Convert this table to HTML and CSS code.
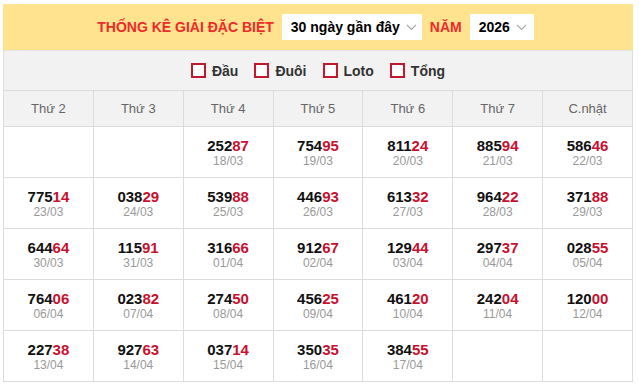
FILE: index.html
```html
<!DOCTYPE html>
<html lang="vi">
<head>
<meta charset="utf-8">
<link rel="stylesheet" href="styles.css">
</head>
<body>
<div class="box">
  <div class="topbar">
    <span class="title">THỐNG KÊ GIẢI ĐẶC BIỆT</span>
    <span class="select sel-days">30 ngày gần đây <svg class="chev" width="11" height="7" viewBox="0 0 11 7"><path d="M1 1l4.5 4.5L10 1" fill="none" stroke="#aaa" stroke-width="1.2"/></svg></span>
    <span class="title">NĂM</span>
    <span class="select sel-year">2026 <svg class="chev" width="11" height="7" viewBox="0 0 11 7"><path d="M1 1l4.5 4.5L10 1" fill="none" stroke="#aaa" stroke-width="1.2"/></svg></span>
  </div>
  <div class="filters">
    <label class="chk"><span class="sq"></span>Đầu</label>
    <label class="chk"><span class="sq"></span>Đuôi</label>
    <label class="chk"><span class="sq"></span>Loto</label>
    <label class="chk"><span class="sq"></span>Tổng</label>
  </div>
  <table class="grid">
    <thead>
      <tr><th>Thứ 2</th><th>Thứ 3</th><th>Thứ 4</th><th>Thứ 5</th><th>Thứ 6</th><th>Thứ 7</th><th>C.nhật</th></tr>
    </thead>
    <tbody>
      <tr>
        <td></td><td></td>
        <td><div class="n">252<b>87</b></div><div class="d">18/03</div></td>
        <td><div class="n">754<b>95</b></div><div class="d">19/03</div></td>
        <td><div class="n">811<b>24</b></div><div class="d">20/03</div></td>
        <td><div class="n">885<b>94</b></div><div class="d">21/03</div></td>
        <td><div class="n">586<b>46</b></div><div class="d">22/03</div></td>
      </tr>
      <tr>
        <td><div class="n">775<b>14</b></div><div class="d">23/03</div></td>
        <td><div class="n">038<b>29</b></div><div class="d">24/03</div></td>
        <td><div class="n">539<b>88</b></div><div class="d">25/03</div></td>
        <td><div class="n">446<b>93</b></div><div class="d">26/03</div></td>
        <td><div class="n">613<b>32</b></div><div class="d">27/03</div></td>
        <td><div class="n">964<b>22</b></div><div class="d">28/03</div></td>
        <td><div class="n">371<b>88</b></div><div class="d">29/03</div></td>
      </tr>
      <tr>
        <td><div class="n">644<b>64</b></div><div class="d">30/03</div></td>
        <td><div class="n">115<b>91</b></div><div class="d">31/03</div></td>
        <td><div class="n">316<b>66</b></div><div class="d">01/04</div></td>
        <td><div class="n">912<b>67</b></div><div class="d">02/04</div></td>
        <td><div class="n">129<b>44</b></div><div class="d">03/04</div></td>
        <td><div class="n">297<b>37</b></div><div class="d">04/04</div></td>
        <td><div class="n">028<b>55</b></div><div class="d">05/04</div></td>
      </tr>
      <tr>
        <td><div class="n">764<b>06</b></div><div class="d">06/04</div></td>
        <td><div class="n">023<b>82</b></div><div class="d">07/04</div></td>
        <td><div class="n">274<b>50</b></div><div class="d">08/04</div></td>
        <td><div class="n">456<b>25</b></div><div class="d">09/04</div></td>
        <td><div class="n">461<b>20</b></div><div class="d">10/04</div></td>
        <td><div class="n">242<b>04</b></div><div class="d">11/04</div></td>
        <td><div class="n">120<b>00</b></div><div class="d">12/04</div></td>
      </tr>
      <tr>
        <td><div class="n">227<b>38</b></div><div class="d">13/04</div></td>
        <td><div class="n">927<b>63</b></div><div class="d">14/04</div></td>
        <td><div class="n">037<b>14</b></div><div class="d">15/04</div></td>
        <td><div class="n">350<b>35</b></div><div class="d">16/04</div></td>
        <td><div class="n">384<b>55</b></div><div class="d">17/04</div></td>
        <td></td><td></td>
      </tr>
    </tbody>
  </table>
</div>
</body>
</html>
```

FILE: styles.css
```css
html, body {
  margin: 0;
  padding: 0;
  background: #fff;
}
body {
  font-family: "Liberation Sans", Arial, sans-serif;
  padding: 4px 0 0 3px;
}
.box {
  width: 630px;
}
.topbar {
  height: 46px;
  background: #ffe38f;
  display: flex;
  align-items: center;
  justify-content: center;
  padding-right: 5px;
  box-sizing: border-box;
}
.title {
  color: #ee2a2a;
  font-weight: bold;
  font-size: 14px;
  margin-right: 8px;
}
.select {
  background: #fff;
  height: 26px;
  display: inline-flex;
  align-items: center;
  font-weight: bold;
  font-size: 14px;
  color: #000;
  box-sizing: border-box;
  margin-right: 8px;
}
.sel-days {
  width: 140px;
  padding-left: 9px;
}
.sel-year {
  width: 64px;
  padding-left: 9px;
  margin-right: 0;
}
.chev {
  margin-left: 6px;
  margin-top: 1px;
}
.filters {
  height: 40px;
  background: #f2f2f2;
  border-top: 1px solid #e3e3e3;
  box-sizing: border-box;
  display: flex;
  align-items: center;
  justify-content: center;
  gap: 16px;
  border-left: 1px solid #ddd;
  border-right: 1px solid #ddd;
  width: 630px;
}
.chk {
  display: inline-flex;
  align-items: center;
  font-weight: bold;
  font-size: 14px;
  color: #333;
}
.sq {
  width: 15px;
  height: 15px;
  border: 2px solid #c0182c;
  box-sizing: border-box;
  margin-right: 6px;
  background: #fff;
}
.grid {
  border-collapse: collapse;
  width: 630px;
  table-layout: fixed;
}
.grid th, .grid td {
  border: 1px solid #dcdcdc;
  text-align: center;
  padding: 0;
}
.grid th {
  background: #f2f2f2;
  font-weight: normal;
  font-size: 13px;
  color: #666;
  height: 35px;
}
.grid td {
  height: 50px;
  vertical-align: middle;
}
.n {
  font-weight: bold;
  font-size: 15px;
  color: #111;
  line-height: 17px;
}
.n b {
  color: #c8102e;
}
.d {
  font-size: 12px;
  color: #999;
  line-height: 14px;
}
```
